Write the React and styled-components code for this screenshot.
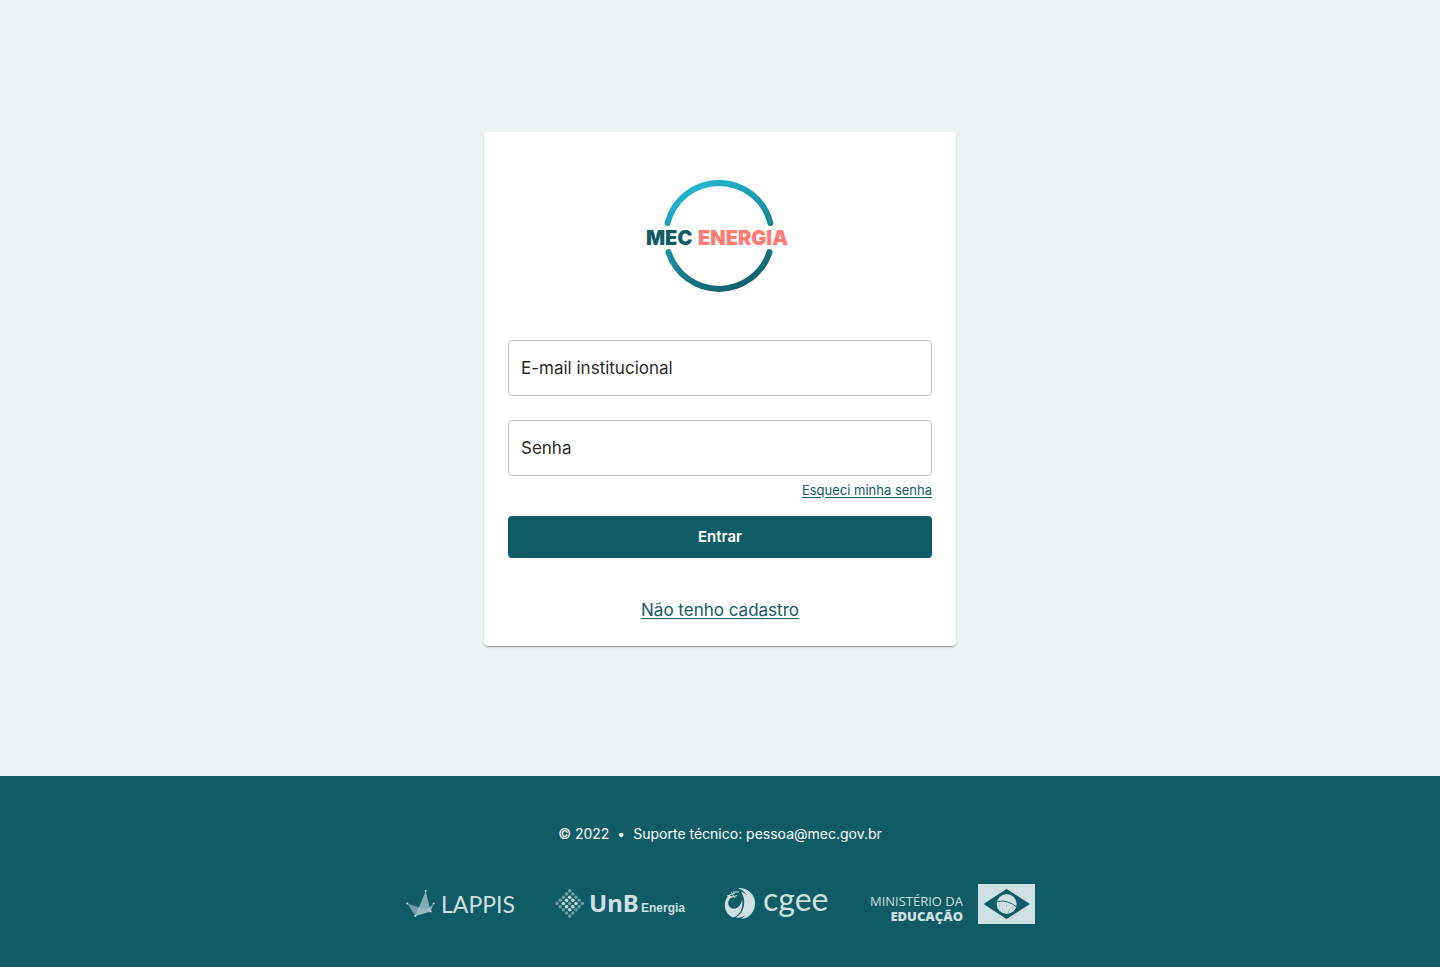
import React from "react";
import styled, { createGlobalStyle } from "styled-components";

const TEAL = "#0f5c66";
const PALE = "#cfdfe2";

const GlobalStyle = createGlobalStyle`
  *, *::before, *::after { box-sizing: border-box; }
  body {
    margin: 0;
    background: #eef4f4;
    color: rgba(0, 0, 0, 0.87);
    font-family: Inter, "Liberation Sans", sans-serif;
    font-size: 17px;
    line-height: 24px;
  }
`;

const Page = styled.div`
  display: flex;
  flex-direction: column;
  min-height: 100vh;
`;

const Main = styled.main`
  flex: 1;
  display: flex;
  align-items: center;
  justify-content: center;
  padding: 26px 24px 24px;
`;

const Card = styled.section`
  display: flex;
  flex-direction: column;
  width: 100%;
  max-width: 472px;
  padding: 48px 24px 24px;
  border-radius: 4px;
  background: #fff;
  box-shadow: 0 2px 1px -1px rgba(0, 0, 0, 0.2), 0 1px 1px rgba(0, 0, 0, 0.14),
    0 1px 3px rgba(0, 0, 0, 0.12);
`;

const Brand = styled.svg`
  display: block;
  align-self: center;
  margin-bottom: 48px;
`;

const Form = styled.form`
  display: flex;
  flex-direction: column;
`;

const Field = styled.div`
  position: relative;
  margin-bottom: ${(p) => (p.$last ? "0" : "24px")};
`;

const Input = styled.input`
  display: block;
  width: 100%;
  height: 56px;
  padding: 16px 12px;
  border: 1px solid rgba(0, 0, 0, 0.24);
  border-radius: 4px;
  background: transparent;
  color: inherit;
  font: inherit;
`;

const Label = styled.label`
  position: absolute;
  top: 16px;
  left: 13px;
  pointer-events: none;

  ${Input}:focus + &, ${Input}:not(:placeholder-shown) + & {
    display: none;
  }
`;

const Link = styled.a`
  color: ${TEAL};
  text-decoration: underline;
  text-underline-offset: 2px;
  align-self: ${(p) => (p.$small ? "flex-end" : "center")};
  font-size: ${(p) => (p.$small ? "13px" : "17px")};
  line-height: ${(p) => (p.$small ? "20px" : "24px")};
  margin: ${(p) => (p.$small ? "4px 0 16px" : "40px 0 0")};
`;

const Submit = styled.button`
  height: 42px;
  border: 0;
  border-radius: 4px;
  background: ${TEAL};
  color: #fff;
  font: inherit;
  font-size: 15px;
  font-weight: 600;
  cursor: pointer;
`;

const Footer = styled.footer`
  display: flex;
  flex-direction: column;
  align-items: center;
  padding: 48px 24px 43px;
  background: ${TEAL};
  color: #fff;
  font-size: 14px;
  line-height: 20px;
`;

const Support = styled.p`
  display: flex;
  gap: 8px;
  margin: 0 0 40px;
`;

const Partners = styled.div`
  display: flex;
  flex-wrap: wrap;
  justify-content: center;
  gap: 39px;
`;

const PartnerLogo = styled.svg`
  display: block;
  height: 40px;
  overflow: visible;
  fill: ${PALE};
`;

function BrandLogo() {
  return (
    <Brand width="148" height="112" viewBox="0 0 148 112" role="img" aria-label="MEC Energia">
      <defs>
        <linearGradient id="ring" gradientUnits="userSpaceOnUse" x1="50" y1="4" x2="94" y2="108">
          <stop offset="0" stopColor="#22b6cf" />
          <stop offset="1" stopColor="#11626d" />
        </linearGradient>
      </defs>
      <g fill="none" stroke="url(#ring)" strokeWidth="6" strokeLinecap="round">
        <path d="M21.600 43A53 53 0 0 1 124.400 43" />
        <path d="M22.500 72A53 53 0 0 0 123.500 72" />
      </g>
      <g fontFamily="Inter, sans-serif" fontSize="20" fontWeight="900">
        <text x="0" y="65" fill={TEAL}>MEC</text>
        <text x="52" y="65" fill="#ff7a73">ENERGIA</text>
      </g>
    </Brand>
  );
}

function LappisLogo() {
  return (
    <PartnerLogo width="110" viewBox="0 0 110 40" role="img" aria-label="LAPPIS">
      <path d="M1.300 19.500L15 24L9.300 32Z" opacity=".5" />
      <path d="M19.700 7L24.700 27.500L9.300 32Z" opacity=".6" />
      <path d="M15 24L24.700 27.500L9.300 32Z" opacity=".3" />
      <path d="M27.700 19.500L24.700 27.500L21 26Z" opacity=".6" />
      <circle cx="1.300" cy="19.500" r="1" />
      <circle cx="19.700" cy="7" r="1" />
      <circle cx="27.700" cy="19.500" r="1" />
      <circle cx="9.300" cy="32" r="1" />
      <circle cx="24.700" cy="27.500" r="1" />
      <text x="35" y="29" fontFamily="Lato, sans-serif" fontWeight="400" fontSize="23">LAPPIS</text>
    </PartnerLogo>
  );
}

const STEPS = [0, 1, 2, 3, 4];

function UnbLogo() {
  return (
    <PartnerLogo width="130" viewBox="0 0 130 40" role="img" aria-label="UnB Energia">
      {STEPS.map((i) =>
        STEPS.map((j) => {
          const ring = Math.max(Math.abs(i - 2), Math.abs(j - 2));
          return (
            <circle
              key={j}
              cx={14.7 + (i - j) * 3.15}
              cy={6.9 + (i + j) * 3.15}
              r="1.800"
              opacity={ring === 1 ? 0.95 : 0.5}
            />
          );
        })
      )}
      <text x="34" y="28" fontFamily="Noto Sans, sans-serif" fontWeight="700" fontSize="24">UnB</text>
      <text x="86" y="28" fontFamily="Liberation Sans, sans-serif" fontWeight="700" fontSize="12">Energia</text>
    </PartnerLogo>
  );
}

function CgeeLogo() {
  return (
    <PartnerLogo width="106" viewBox="0 0 106 40" role="img" aria-label="cgee">
      <path d="M14 4A15.500 15.500 0 0 1 17 35A17.500 17.500 0 0 0 14 4Z" />
      <path d="M17 8A13 13 0 0 1 12 33.500A18 18 0 0 0 17 8Z" />
      <path d="M5 11C-1 17 -1 29 9 33.500C15 32 20 25 18 15C18 23 9 28 5 22C3 18 5 14 9 13Z" />
      <path d="M3 12L11 9M5 14L13 11.500M7 8L11 14M9 8L15 8" fill="none" stroke={PALE} strokeWidth="1" />
      <text x="39" y="27" fontFamily="Lato, sans-serif" fontWeight="400" fontSize="32">cgee</text>
    </PartnerLogo>
  );
}

function MecLogo() {
  return (
    <PartnerLogo width="166" viewBox="0 0 166 40" role="img" aria-label="Ministério da Educação">
      <g fontFamily="Open Sans, sans-serif" textAnchor="end">
        <text x="94" y="22" fontWeight="400" fontSize="13">MINISTÉRIO DA</text>
        <text x="94" y="37" fontWeight="800" fontSize="13">EDUCAÇÃO</text>
      </g>
      <rect x="109" width="57" height="40" />
      <path d="M114.500 20L137.500 5L161 20L137.500 35Z" fill={TEAL} />
      <circle cx="137.700" cy="20" r="10" />
      <g fill="none" stroke={TEAL} strokeWidth="1">
        <path d="M128.500 17.500Q139 15.500 147.500 23" />
        <path d="M130 22h1M133 25h1M137 22h1M140 26h1M143 24h1M135 28h1M139 28h1" opacity=".5" />
      </g>
    </PartnerLogo>
  );
}

export default function App() {
  return (
    <Page>
      <GlobalStyle />
      <Main>
        <Card>
          <BrandLogo />
          <Form onSubmit={(e) => e.preventDefault()}>
            <Field>
              <Input id="email" type="email" placeholder=" " />
              <Label htmlFor="email">E-mail institucional</Label>
            </Field>
            <Field $last>
              <Input id="password" type="password" placeholder=" " />
              <Label htmlFor="password">Senha</Label>
            </Field>
            <Link $small href="#senha">Esqueci minha senha</Link>
            <Submit type="submit">Entrar</Submit>
          </Form>
          <Link href="#cadastro">Não tenho cadastro</Link>
        </Card>
      </Main>
      <Footer>
        <Support>
          <span>© 2022</span>
          <span>•</span>
          <span>Suporte técnico: pessoa@mec.gov.br</span>
        </Support>
        <Partners>
          <LappisLogo />
          <UnbLogo />
          <CgeeLogo />
          <MecLogo />
        </Partners>
      </Footer>
    </Page>
  );
}
